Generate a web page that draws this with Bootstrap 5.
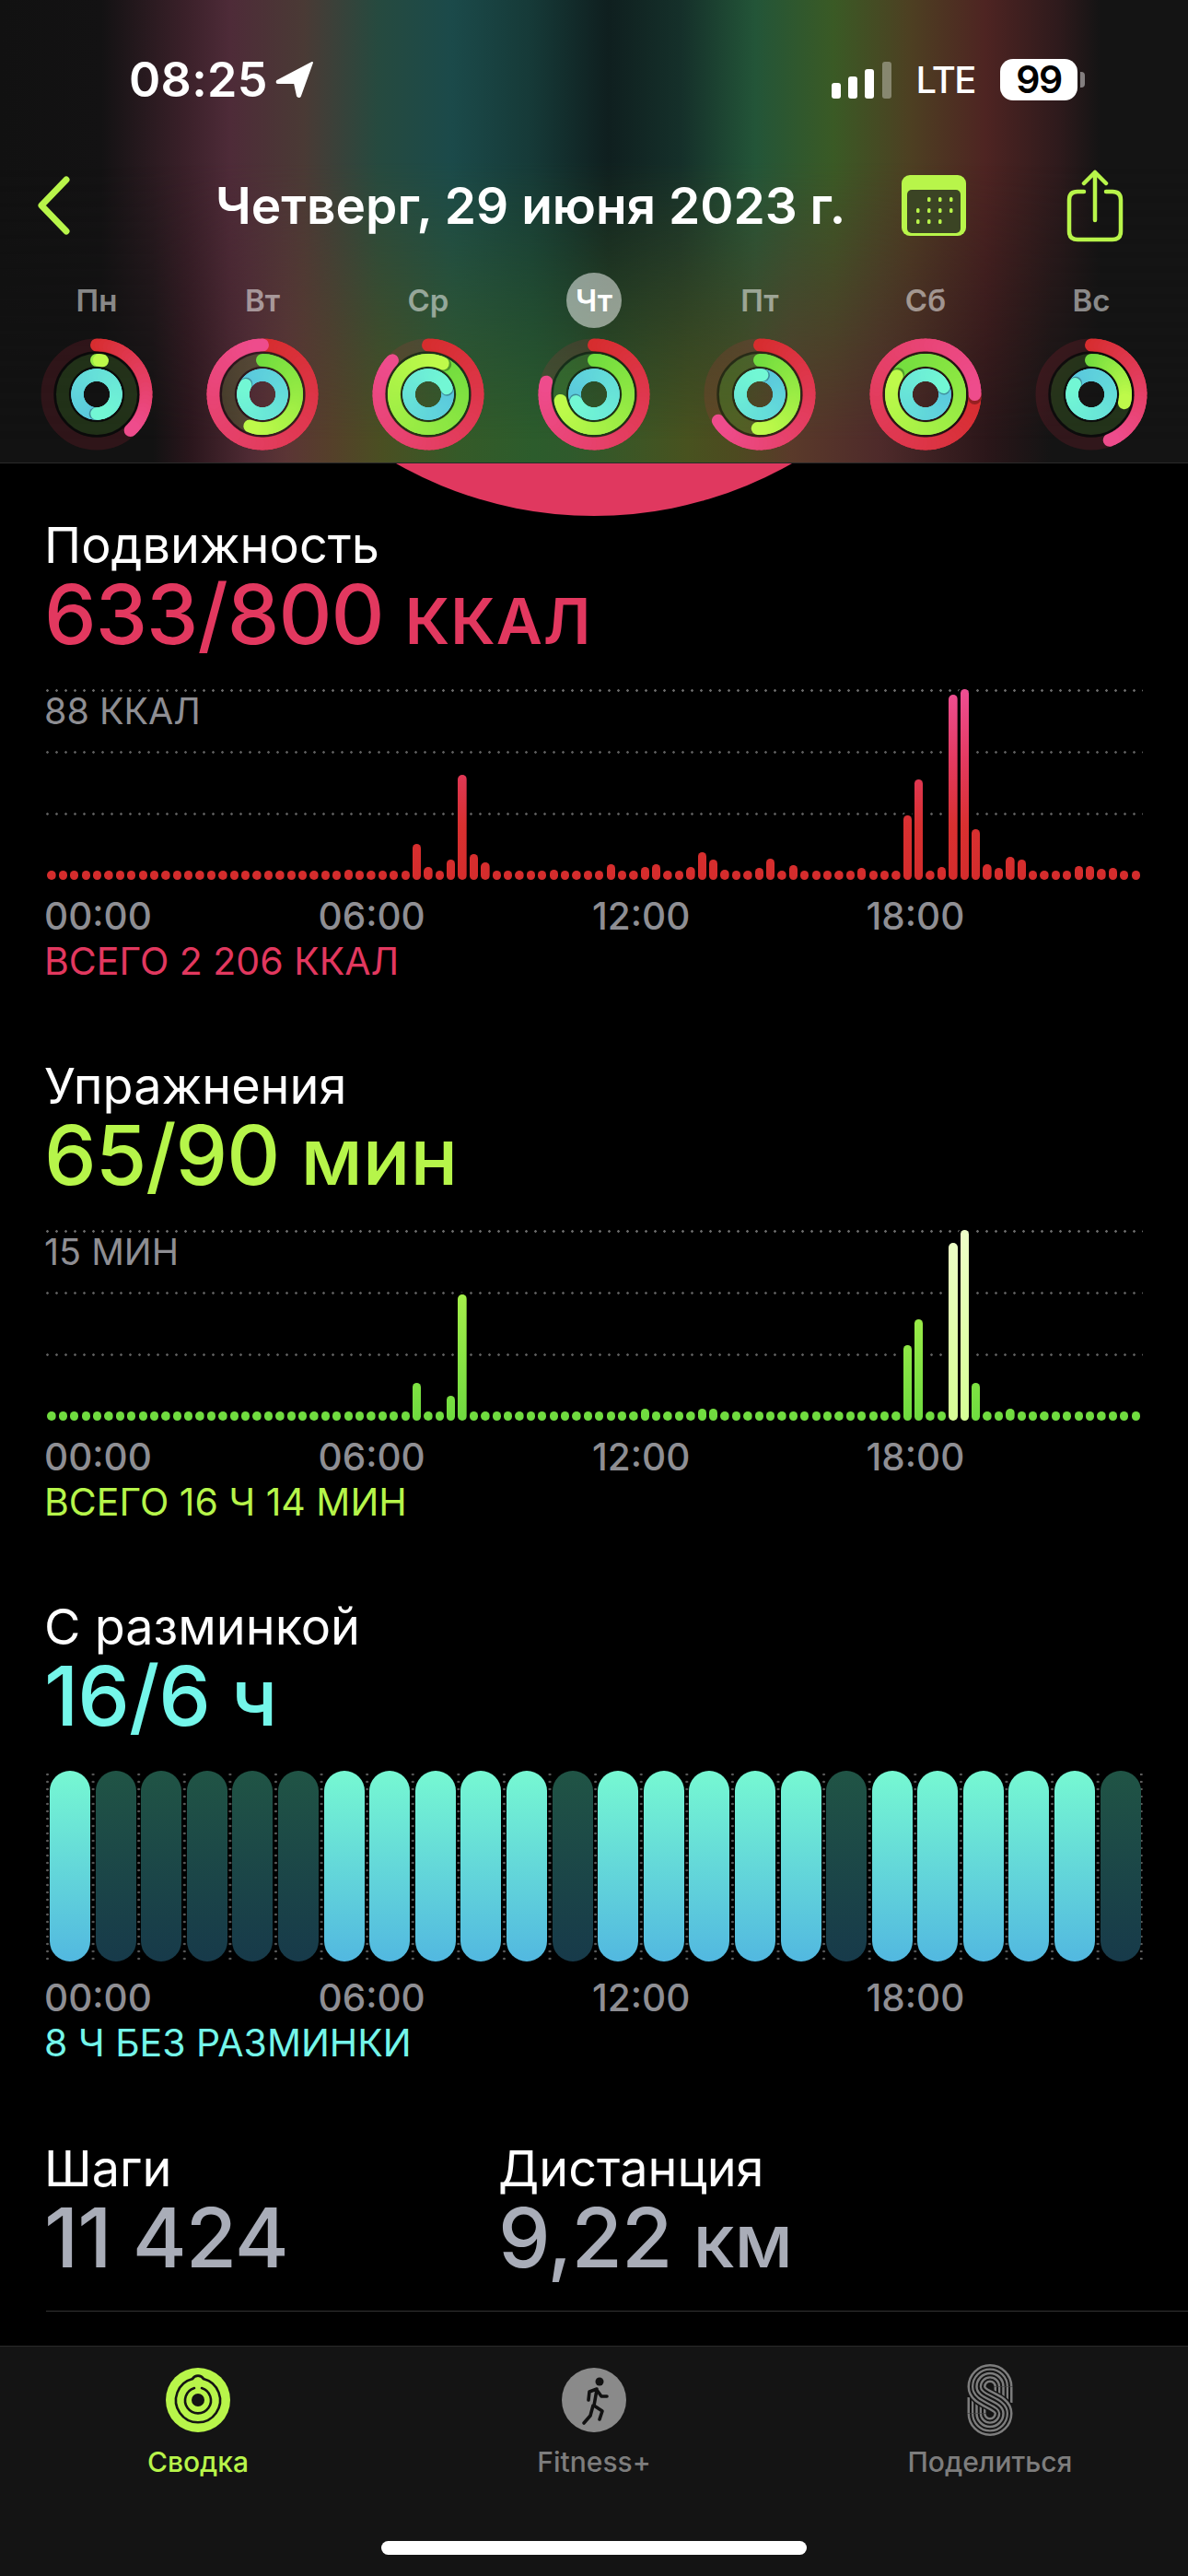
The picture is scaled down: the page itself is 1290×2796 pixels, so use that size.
<!DOCTYPE html>
<html lang="ru">
<head>
    <meta charset="UTF-8">
    <meta name="viewport" content="width=device-width, initial-scale=1.0">
    <title>Активность</title>
    <link href="https://cdn.jsdelivr.net/npm/bootstrap@5.3.0/dist/css/bootstrap.min.css" rel="stylesheet">
    <style>
        html, body { background: #000; }
        body {
            width: 1290px;
            height: 2796px;
            overflow: hidden;
            font-family: Inter, "Liberation Sans", sans-serif;
            color: #fff;
        }
        .top-head {
            height: 503px;
            position: relative;
            z-index: 2;
            background: linear-gradient(90deg, #121212 0, #121212 166px, #2a161c 207px, #4e2a33 270px, #5b3535 311px, #55402a 360px, #4a4f22 415px, #355a28 497px, #2c5c2c 580px, #2f5a2c 620px, #48521f 746px, #4d4a20 800px, #5a3a2a 858px, #4e2a2a 956px, #2a1619 1072px, #141414 1142px);
            border-bottom: 1px solid #2a2a2a;
        }
        .top-head::before {
            content: "";
            position: absolute;
            inset: 0;
            background: linear-gradient(90deg, #111 0, #131213 110px, #3a2029 200px, #4e2b38 250px, #4a3a35 330px, #264a3f 410px, #1b4a4a 490px, #163a38 575px, #0f1f1f 660px, #15302a 740px, #235538 820px, #3a5a25 905px, #4d4022 987px, #4e2422 1070px, #2e1a1c 1150px, #141414 1195px);
            -webkit-mask-image: linear-gradient(180deg, #000 35%, transparent 95%);
            mask-image: linear-gradient(180deg, #000 35%, transparent 95%);
        }
        .top-head > * { position: relative; }
        .status-row { height: 45px; padding: 64px 112px 0 140px; box-sizing: content-box; }
        .clock { font-size: 52px; font-weight: 600; line-height: 45px; letter-spacing: .3px; }
        .lte { font-size: 40px; font-weight: 500; line-height: 45px; letter-spacing: -1.5px; margin-left: 25px; }
        .batt {
            width: 84px;
            height: 45px;
            margin-left: 27px;
            border-radius: 14px;
            background: #fff;
            color: #000;
            font-size: 41px;
            font-weight: 600;
            line-height: 45px;
            letter-spacing: -1.5px;
            text-align: center;
        }
        .batt-nub { width: 5px; height: 17px; border-radius: 0 4px 4px 0; background: rgba(255,255,255,.45); margin-left: 3px; }
        .nav-row { height: 80px; margin-top: 74px; padding: 0 70px 0 39px; }
        .day-title { font-size: 55px; font-weight: 600; line-height: 66px; margin-left: 157px; white-space: nowrap; }
        .share-icon { margin-left: 109px; }
        .days-row { margin-top: 33px; padding-left: 15px; }
        .day-col { width: 180px; }
        .day-name {
            width: 60px;
            height: 60px;
            margin-bottom: 11px;
            border-radius: 50%;
            font-size: 33px;
            font-weight: 600;
            line-height: 60px;
            text-align: center;
            color: rgba(255,255,255,.5);
        }
        .day-name.today { background: rgba(255,255,255,.5); color: #fff; }
        .ring-svg { display: block; width: 122px; height: 122px; }

        .page-body { height: 2043px; position: relative; overflow: hidden; }
        .big-ring {
            position: absolute;
            left: 211px;
            top: -811px;
            width: 868px;
            height: 868px;
            border-radius: 50%;
            background: #e0385f;
        }
        .metric { position: relative; padding: 59px 49px 0 48px; height: 587px; }
        .metric-name { font-size: 54px; font-weight: 400; line-height: 60px; margin: 0; }
        .metric-value { font-size: 90px; font-weight: 500; line-height: 88px; margin-top: 1px; white-space: nowrap; letter-spacing: -1px; }
        .metric-value .unit-caps { font-size: 69px; font-weight: 600; line-height: 1; letter-spacing: 1px; }
        .metric-value .unit-low { font-size: 86px; font-weight: 500; line-height: 1; letter-spacing: 0; }
        .metric-value .unit-km { font-size: 81px; font-weight: 500; line-height: 1; letter-spacing: 0; }
        .c-move { color: #e2385f; }
        .c-ex { color: #b6f54a; }
        .c-stand { color: #74f6ea; }
        .c-plain { color: #a9adb8; }
        .chart {
            position: relative;
            height: 207px;
            margin: 37px 0 0 2px;
            width: 1191px;
            padding-left: 1.4px;
            gap: 3.1px;
            background-image:
                radial-gradient(circle at 1.5px 1.5px, #6a6a6a 1px, transparent 1.6px),
                radial-gradient(circle at 1.5px 1.5px, #5c5c5c 1px, transparent 1.6px),
                radial-gradient(circle at 1.5px 1.5px, #5c5c5c 1px, transparent 1.6px);
            background-size: 10px 3px;
            background-repeat: repeat-x;
            background-position: 0 0, 0 67px, 0 134px;
        }
        .chart-unit {
            position: absolute;
            left: -2px;
            top: 4px;
            font-size: 39.5px;
            line-height: 40px;
            color: #8e8e93;
        }
        .hbar { flex: none; width: 9.3px; border-radius: 5px; box-shadow: 0 0 0 2.5px #000; position: relative; }
        .bar-move { background: linear-gradient(0deg, #d42c2c 0, #d93030 60px, #e33a60 130px, #ef4f94 207px) bottom / 100% 207px no-repeat; }
        .bar-ex { background: linear-gradient(0deg, #6edb3f 0, #a6f04a 140px, #b5f54a 207px) bottom / 100% 207px no-repeat; }
        .bar-ex-high { background: linear-gradient(0deg, #d6ff95 0, #eeffc8 207px); }
        .stand-chart {
            height: 207px;
            margin: 37px 0 0 2px;
            width: 1191px;
            padding-left: 4px;
            display: grid;
            grid-template-columns: repeat(24, 44px);
            column-gap: 5.6px;
            background-image:
                radial-gradient(circle at 1.5px 4px, #5c5c5c 1px, transparent 1.6px),
                radial-gradient(circle at 1189px 4px, #5c5c5c 1px, transparent 1.6px);
            background-size: 49.6px 8px, 1191px 8px;
        }
        .stand-pill { border-radius: 22px; }
        .pill-on { background: linear-gradient(180deg, #76f8d2 0, #52b8e0 100%); }
        .pill-off { background: linear-gradient(180deg, #205445 0, #173a4a 100%); }
        .time-row { margin-top: 17px; width: 1190px; font-size: 40.5px; font-weight: 500; line-height: 46px; color: #8e8e93; }
        .time-row div { width: 25%; }
        .metric-note { font-size: 41px; line-height: 46px; margin-top: 2px; white-space: nowrap; }
        .last-metric { height: auto; padding-top: 60px; }
        .last-metric .w-first { width: 493px; }
        .rule-line { position: absolute; left: 50px; right: 0; bottom: 37px; height: 1px; background: #333; }

        .tabbar { height: 250px; background: #141414; border-top: 1px solid #2a2a2a; position: relative; }
        .tab-item { padding-top: 17px; }
        .tab-icon { height: 82px; display: flex; align-items: center; justify-content: center; }
        .tab-text { font-size: 30px; font-weight: 500; line-height: 36px; margin-top: 8px; color: #7d7d7d; }
        .tab-text.on { color: #b8f54a; }
        .home-bar { position: absolute; left: 414px; top: 211px; width: 462px; height: 15px; border-radius: 8px; background: #fff; }
    </style>
</head>
<body>
    <header class="top-head">
        <div class="status-row d-flex align-items-center">
            <span class="clock">08:25</span>
            <svg width="42" height="41" viewBox="0 0 42 41" class="ms-2">
                <path d="M40 2 L2 22 Q1 24 3 24 L21 24 L24 38 Q26 40 27 38 Z" fill="#fff" stroke="#fff" stroke-width="2" stroke-linejoin="round"/>
            </svg>
            <svg width="66" height="41" viewBox="0 0 66 41" class="ms-auto">
                <rect x="0" y="24" width="10" height="17" rx="3" fill="#fff"/>
                <rect x="18" y="17" width="10" height="24" rx="3" fill="#fff"/>
                <rect x="36" y="9" width="10" height="32" rx="3" fill="#fff"/>
                <rect x="55" y="1" width="10" height="40" rx="3" fill="#fff" fill-opacity=".35"/>
            </svg>
            <span class="lte">LTE</span>
            <div class="batt">99</div>
            <div class="batt-nub"></div>
        </div>

        <nav class="nav-row d-flex align-items-center">
            <svg width="38" height="66" viewBox="0 0 38 66">
                <path d="M33 5 L6 33 L33 61" fill="none" stroke="#b8f54a" stroke-width="7" stroke-linecap="round" stroke-linejoin="round"/>
            </svg>
            <div class="day-title">Четверг, 29 июня 2023 г.</div>
            <svg width="70" height="66" viewBox="0 0 70 66" class="ms-auto">
                <rect width="70" height="66" rx="9" fill="#b8f54a"/>
                <rect x="6" y="16" width="58" height="47" rx="5" fill="#3b4424"/>
                <g fill="#b8f54a">
                    <rect x="28" y="24" width="3.5" height="5" rx="1.5"/><rect x="40" y="24" width="3.5" height="5" rx="1.5"/><rect x="52" y="24" width="3.5" height="5" rx="1.5"/>
                    <rect x="16" y="36" width="3.5" height="5" rx="1.5"/><rect x="28" y="36" width="3.5" height="5" rx="1.5"/><rect x="40" y="36" width="3.5" height="5" rx="1.5"/><rect x="52" y="36" width="3.5" height="5" rx="1.5"/>
                    <rect x="16" y="48" width="3.5" height="5" rx="1.5"/><rect x="28" y="48" width="3.5" height="5" rx="1.5"/><rect x="40" y="48" width="3.5" height="5" rx="1.5"/>
                </g>
            </svg>
            <svg class="share-icon" width="62" height="80" viewBox="0 0 62 80">
                <path d="M19 25 H12 Q3 25 3 34 V68 Q3 77 12 77 H50 Q59 77 59 68 V34 Q59 25 50 25 H43 M31 56 V4 M19 16 L31 4 L43 16" fill="none" stroke="#b8f54a" stroke-width="4.5" stroke-linecap="round" stroke-linejoin="round"/>
            </svg>
        </nav>

        <div class="days-row d-flex" id="daysRow"></div>
    </header>

    <main class="page-body">
        <div class="big-ring"></div>

        <section class="metric">
            <h2 class="metric-name">Подвижность</h2>
            <div class="metric-value c-move">633/800 <span class="unit-caps">ККАЛ</span></div>
            <div class="chart d-flex align-items-end" id="moveChart">
                <div class="chart-unit">88 ККАЛ</div>
            </div>
            <div class="time-row d-flex"><div>00:00</div><div>06:00</div><div>12:00</div><div>18:00</div></div>
            <div class="metric-note c-move">ВСЕГО 2 206 ККАЛ</div>
        </section>

        <section class="metric">
            <h2 class="metric-name">Упражнения</h2>
            <div class="metric-value c-ex">65/90 <span class="unit-low">мин</span></div>
            <div class="chart d-flex align-items-end" id="exChart">
                <div class="chart-unit">15 МИН</div>
            </div>
            <div class="time-row d-flex"><div>00:00</div><div>06:00</div><div>12:00</div><div>18:00</div></div>
            <div class="metric-note c-ex">ВСЕГО 16 Ч 14 МИН</div>
        </section>

        <section class="metric">
            <h2 class="metric-name">С разминкой</h2>
            <div class="metric-value c-stand">16/6 <span class="unit-low">ч</span></div>
            <div class="stand-chart" id="standChart"></div>
            <div class="time-row d-flex"><div>00:00</div><div>06:00</div><div>12:00</div><div>18:00</div></div>
            <div class="metric-note c-stand">8 Ч БЕЗ РАЗМИНКИ</div>
        </section>

        <section class="metric last-metric d-flex">
            <div class="w-first">
                <h2 class="metric-name">Шаги</h2>
                <div class="metric-value c-plain">11 424</div>
            </div>
            <div>
                <h2 class="metric-name">Дистанция</h2>
                <div class="metric-value c-plain">9,22 <span class="unit-km">км</span></div>
            </div>
        </section>
        <div class="rule-line"></div>
    </main>

    <footer class="tabbar">
        <div class="row g-0 text-center">
            <div class="col-4 tab-item">
                <div class="tab-icon">
                    <svg width="70" height="70" viewBox="0 0 70 70">
                        <circle cx="35" cy="35" r="35" fill="#b8f54a"/>
                        <g fill="none" stroke="#141414" stroke-width="2.6" stroke-linecap="round">
                            <path d="M41 12 A24 24 0 1 1 29 12"/>
                            <path d="M29 12 A7 7 0 0 1 41 12"/>
                            <path d="M39 22 A14 14 0 1 1 31 22"/>
                        </g>
                        <circle cx="35" cy="35" r="7" fill="#141414"/>
                    </svg>
                </div>
                <div class="tab-text on">Сводка</div>
            </div>
            <div class="col-4 tab-item">
                <div class="tab-icon">
                    <svg width="70" height="70" viewBox="0 0 70 70">
                        <circle cx="35" cy="35" r="35" fill="#8a8a8a"/>
                        <circle cx="41" cy="15" r="4.5" fill="#111"/>
                        <path d="M38 24 L35 41 M38 23 L30 26 L29 35 M38 24 L43 31 L49 31 M35 41 L44 47 L41 56 M34 41 L31 52 L24 60" fill="none" stroke="#111" stroke-width="3.6" stroke-linecap="round" stroke-linejoin="round"/>
                    </svg>
                </div>
                <div class="tab-text">Fitness+</div>
            </div>
            <div class="col-4 tab-item">
                <div class="tab-icon">
                    <svg width="50" height="78" viewBox="0 0 50 78">
                        <defs>
                            <path id="sArms" d="M39.5 24.5 V42 M10.5 53.5 V36" fill="none"/>
                            <path id="sCurve" d="M39.5 24.5 A14.5 14.5 0 0 0 10.5 24.5 C10.5 39 39.5 39 39.5 53.5 A14.5 14.5 0 0 1 10.5 53.5" fill="none"/>
                        </defs>
                        <use href="#sArms" stroke="#7d7d7d" stroke-width="20"/>
                        <use href="#sArms" stroke="#141414" stroke-width="15"/>
                        <use href="#sArms" stroke="#7d7d7d" stroke-width="11"/>
                        <use href="#sArms" stroke="#141414" stroke-width="6.5"/>
                        <use href="#sArms" stroke="#7d7d7d" stroke-width="2.5"/>
                        <use href="#sCurve" stroke="#141414" stroke-width="23"/>
                        <use href="#sCurve" stroke="#7d7d7d" stroke-width="20"/>
                        <use href="#sCurve" stroke="#141414" stroke-width="15"/>
                        <use href="#sCurve" stroke="#7d7d7d" stroke-width="11"/>
                        <use href="#sCurve" stroke="#141414" stroke-width="6.5"/>
                        <use href="#sCurve" stroke="#7d7d7d" stroke-width="2.5"/>
                    </svg>
                </div>
                <div class="tab-text">Поделиться</div>
            </div>
        </div>
        <div class="home-bar"></div>
    </footer>

    <script>
        // Rings: move, exercise, stand, in laps
        const DAYS = [
            { name: 'Пн', laps: [0.38, 0.026, 1.5] },
            { name: 'Вт', laps: [1.0, 0.56, 1.83] },
            { name: 'Ср', laps: [0.87, 1.07, 1.2] },
            { name: 'Чт', laps: [0.79, 0.72, 2.69], today: true },
            { name: 'Пт', laps: [0.66, 0.51, 1.02] },
            { name: 'Сб', laps: [1.25, 1.84, 1.19] },
            { name: 'Вс', laps: [0.44, 0.29, 1.84] }
        ];
        const RINGS = [
            { r: 53.5, w: 14, from: [214, 44, 44], to: [238, 76, 140], track: 'rgba(224,40,70,.14)' },
            { r: 37, w: 14, from: [110, 219, 62], to: [190, 250, 74], track: 'rgba(120,230,60,.15)' },
            { r: 21, w: 13.5, from: [88, 196, 222], to: [114, 247, 212], track: 'rgba(90,220,220,.15)' }
        ];

        function point(r, laps) {
            const a = laps * 2 * Math.PI;
            return [61 + r * Math.sin(a), 61 - r * Math.cos(a)];
        }

        function ringSvg(laps) {
            let out = '';
            RINGS.forEach((ring, idx) => {
                out += `<circle cx="61" cy="61" r="${ring.r}" fill="none" stroke="${ring.track}" stroke-width="${ring.w}"/>`;
                const total = laps[idx];
                const start = total > 1 ? total - 1 : 0;
                const span = total - start;
                const steps = Math.max(2, Math.ceil(span * 72));
                for (let i = 0; i < steps; i++) {
                    const t = (i + 1) / steps;
                    const p1 = point(ring.r, start + span * i / steps);
                    const p2 = point(ring.r, start + span * t);
                    const c = ring.from.map((v, k) => Math.round(v + (ring.to[k] - v) * t));
                    if (total > 1 && i === steps - 1) {
                        const s = point(ring.r, total + 0.012);
                        out += `<circle cx="${s[0]}" cy="${s[1]}" r="${ring.w / 2}" fill="rgba(0,0,0,.3)"/>`;
                    }
                    out += `<path d="M${p1[0]} ${p1[1]} L${p2[0]} ${p2[1]}" stroke="rgb(${c})" stroke-width="${ring.w}" stroke-linecap="round"/>`;
                }
                if (idx < 2) {
                    out += `<circle cx="61" cy="61" r="${ring.r - ring.w / 2 - 1}" fill="none" stroke="rgba(0,0,0,.4)" stroke-width="2.5"/>`;
                }
            });
            return `<svg class="ring-svg" viewBox="0 0 122 122">${out}</svg>`;
        }

        document.getElementById('daysRow').innerHTML = DAYS.map(day => `
            <div class="day-col d-flex flex-column align-items-center">
                <div class="day-name ${day.today ? 'today' : ''}">${day.name}</div>
                ${ringSvg(day.laps)}
            </div>
        `).join('');

        // Bar heights by quarter of an hour, everything else is a 10px dot
        const MOVE = { 26: 11, 32: 39, 33: 14, 35: 22, 36: 114, 37: 28, 38: 19, 44: 11, 49: 17, 52: 14, 53: 17, 56: 14, 57: 30, 58: 22, 59: 11,
            62: 13, 63: 23, 65: 16, 71: 13, 75: 70, 76: 109, 78: 14, 79: 201, 80: 207, 81: 55, 82: 17, 83: 13, 84: 25, 85: 22, 90: 15, 91: 15, 92: 12, 93: 13 };
        const EX = { 32: 41, 35: 27, 36: 137, 52: 13, 57: 13, 58: 13, 75: 82, 76: 110, 79: 193, 80: 207, 81: 41, 84: 13 };

        function fillBars(id, data, cls) {
            const chart = document.getElementById(id);
            for (let i = 0; i < 96; i++) {
                const h = data[i] || 10;
                const bar = document.createElement('div');
                bar.className = 'hbar ' + (cls === 'bar-ex' && h > 150 ? 'bar-ex-high' : cls);
                bar.style.height = h + 'px';
                chart.appendChild(bar);
            }
        }
        fillBars('moveChart', MOVE, 'bar-move');
        fillBars('exChart', EX, 'bar-ex');

        const STAND_OFF = [1, 2, 3, 4, 5, 11, 17, 23];
        let pills = '';
        for (let i = 0; i < 24; i++) {
            pills += `<div class="stand-pill ${STAND_OFF.includes(i) ? 'pill-off' : 'pill-on'}"></div>`;
        }
        document.getElementById('standChart').innerHTML = pills;
    </script>
    <script src="https://cdn.jsdelivr.net/npm/bootstrap@5.3.0/dist/js/bootstrap.bundle.min.js"></script>
</body>
</html>
